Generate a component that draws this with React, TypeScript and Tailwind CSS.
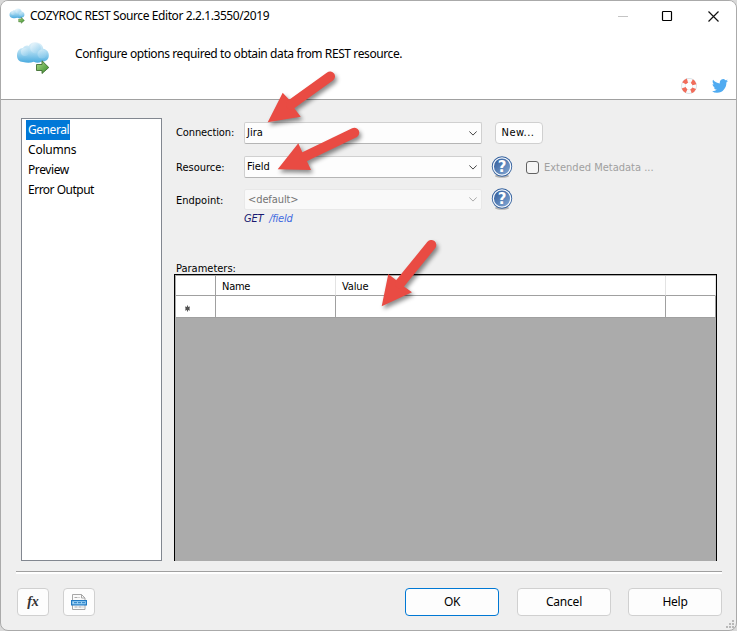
import React from "react";

const UI = "font-['Noto_Sans','Open_Sans',sans-serif] text-[12px] whitespace-pre";
const TAHOMA = "font-['DejaVu_Sans_Condensed','DejaVu_Sans',sans-serif] [font-stretch:condensed] text-[11px] whitespace-pre";

function CloudIcon({ className }: { className: string }) {
  return (
    <svg viewBox="0 0 34 34" className={className}>
      <defs>
        <linearGradient id="cloud" x1="0" y1="0" x2="0" y2="1">
          <stop offset="0" stopColor="#e6f4fb" />
          <stop offset="0.4" stopColor="#b5dff3" />
          <stop offset="1" stopColor="#4aabdf" />
        </linearGradient>
        <linearGradient id="puff" x1="0" y1="0" x2="1" y2="1">
          <stop offset="0" stopColor="#f8fcfe" />
          <stop offset="1" stopColor="#8ccbec" />
        </linearGradient>
        <linearGradient id="leaf" x1="0" y1="0" x2="1" y2="1">
          <stop offset="0" stopColor="#b2dc8c" />
          <stop offset="1" stopColor="#348b27" />
        </linearGradient>
      </defs>
      <path d="M7 21C3 21 .8 18 1 14c.2-4 2.500-7 6-7 1-2 3.500-3 5.500-2C14 2 17 .8 20 1.200c4 .3 7 3 7.200 6.500 4 .5 6 4 5.600 7.300-.4 4-3 5.500-7 5.600-3 1.600-5.500 1.400-8 .2-3.500 1.200-7 1.200-10.800.2z" fill="url(#cloud)" />
      <circle cx="19.500" cy="7" r="5.300" fill="url(#puff)" opacity=".75" />
      <circle cx="9" cy="11" r="4" fill="url(#puff)" opacity=".6" />
      <circle cx="26" cy="13" r="4.500" fill="url(#puff)" opacity=".35" />
      <path d="M20.500 23.500h5.500v-3.700l6.800 6.700-6.800 6v-3h-5.500z" fill="url(#leaf)" stroke="#3f6d32" strokeWidth=".9" />
    </svg>
  );
}

function Lifebuoy() {
  return (
    <svg viewBox="0 0 16 16" className="h-4 w-4">
      <circle cx="8" cy="8" r="5.700" fill="none" stroke="#d5dde2" strokeWidth="4.400" />
      <circle cx="8" cy="8" r="5.400" fill="none" stroke="#fafbfc" strokeWidth="3.600" />
      <circle cx="8" cy="8" r="5.600" fill="none" stroke="#f16d5b" strokeWidth="4.200" strokeDasharray="4.200 4.596" strokeDashoffset="-2.300" />
    </svg>
  );
}

function Bird() {
  return (
    <svg viewBox="0 2 24 20" className="h-[14px] w-4" preserveAspectRatio="none">
      <path fill="#50abf1" d="M23.950 4.570a10 10 0 0 1-2.820.77 4.960 4.960 0 0 0 2.160-2.720c-.95.550-2 .960-3.130 1.180a4.920 4.920 0 0 0-8.380 4.480C7.690 8.090 4.070 6.130 1.640 3.160a4.820 4.820 0 0 0-.67 2.480c0 1.710.870 3.210 2.190 4.100a4.900 4.900 0 0 1-2.230-.62v.06a4.920 4.920 0 0 0 3.950 4.830 5 5 0 0 1-2.210.08 4.940 4.940 0 0 0 4.600 3.420A9.870 9.870 0 0 1 0 19.540a13.990 13.990 0 0 0 7.550 2.210c9.050 0 14-7.500 14-13.980 0-.21 0-.42-.02-.63a9.940 9.940 0 0 0 2.460-2.550z" />
    </svg>
  );
}

function HelpIcon() {
  return (
    <svg viewBox="0 0 22 22" className="block h-[22px] w-[22px]">
      <defs>
        <linearGradient id="ball" x1="0" y1="0" x2="1" y2="1">
          <stop offset="0" stopColor="#2b5797" />
          <stop offset="1" stopColor="#89add8" />
        </linearGradient>
      </defs>
      <ellipse cx="11" cy="20" rx="7" ry="1.700" fill="#777" opacity=".5" />
      <circle cx="11" cy="10.500" r="10.200" fill="#33609d" />
      <circle cx="11" cy="10.500" r="8.700" fill="url(#ball)" stroke="#f5f8fc" strokeWidth="1.300" />
      <text x="11" y="16" textAnchor="middle" fill="#fff" className="font-['DejaVu_Sans'] text-[15px] font-bold">?</text>
    </svg>
  );
}

function Combo({ children, disabled = false }: { children: React.ReactNode; disabled?: boolean }) {
  return (
    <div className={`flex w-[238px] shrink-0 items-center justify-between rounded-[2px] border pr-1 ${disabled ? "h-[21px] border-[#e8e8e8] bg-[#f9f9f9] pl-[3px] text-[#747474]" : "h-[22px] border-[#d0d0d0] border-b-[#b5b5b5] bg-[#fdfdfd] pl-[2px] text-black"}`}>
      {children}
      <svg viewBox="0 0 8 5" className="h-[5px] w-2">
        <path d="M.3.400 4 4.100 7.700.400" fill="none" stroke={disabled ? "#aaa" : "#444"} strokeWidth="1" />
      </svg>
    </div>
  );
}

function Button({ children, className = "" }: { children: React.ReactNode; className?: string }) {
  return (
    <button className={`flex items-center justify-center rounded-[4px] border bg-[#fdfdfd] ${className}`}>{children}</button>
  );
}

const arrows = [
  { head: "267.700,122.300 282.700,92.700 289.700,100.300 294.700,108.700 300.700,116.700", from: [291, 104.500], to: [330, 76.500] },
  { head: "277.700,169.300 298.300,143.300 302.300,152.300 307,161.300 311,170", from: [304, 157], to: [354.300, 132.700] },
  { head: "381.700,306.300 388.300,274 396.300,280.300 404.300,286.700 412,292.300", from: [400, 283.500], to: [431.300, 245] },
];

function Arrows() {
  return (
    <svg viewBox="0 0 737 631" className="pointer-events-none absolute inset-0 h-[631px] w-[737px] drop-shadow-[2px_3px_2px_rgba(0,0,0,0.45)]">
      {arrows.map((a) => (
        <g key={a.head}>
          <polygon points={a.head} fill="#e94b43" />
          <line x1={a.from[0]} y1={a.from[1]} x2={a.to[0]} y2={a.to[1]} stroke="#e94b43" strokeWidth="10" strokeLinecap="round" />
        </g>
      ))}
    </svg>
  );
}

export default function App() {
  return (
    <div className="relative h-[631px] w-[737px] overflow-hidden bg-[#d9d9d9] text-black">
      <div className="flex h-[631px] flex-col overflow-hidden rounded-[8px] border border-[#aaa] bg-[#efefef]">
        <header className="h-[99px] shrink-0 border-b border-[#a0a0a0] bg-white">
          <div className="flex h-[30px] items-center pl-2">
            <CloudIcon className="h-4 w-4" />
            <span className={`${UI} ml-[5px] tracking-[-0.410px]`}>COZYROC REST Source Editor 2.2.1.3550/2019</span>
            <svg viewBox="0 0 104 14" className="mr-[15px] mb-[1px] ml-auto h-[14px] w-[104px]">
              <path d="M1 7.500h10" stroke="#c4c4c4" />
              <rect x="45.500" y="2.500" width="9" height="9" rx=".7" fill="none" stroke="#000" strokeWidth="1.200" />
              <path d="m91.500 2.500 10 10m0-10-10 10" stroke="#111" strokeWidth="1.200" />
            </svg>
          </div>
          <div className="flex h-[68px] pl-[15px]">
            <CloudIcon className="mt-[10px] h-[34px] w-[34px]" />
            <span className={`${UI} mt-[14px] ml-[25px] tracking-[-0.400px]`}>Configure options required to obtain data from REST resource.</span>
            <div className="mt-auto mr-2 mb-[5px] ml-auto flex items-center gap-[15px]">
              <Lifebuoy />
              <Bird />
            </div>
          </div>
        </header>

        <main className="flex h-[471px] shrink-0 pt-[18px] pl-5">
          <nav className="h-[443px] w-[141px] shrink-0 border border-[#828790] bg-white pt-[1px] pl-1">
            <div className={`${UI} h-5 w-[44px] bg-[#0078d7] pl-[2px] leading-[20px] tracking-[-0.450px] text-white`}>General</div>
            <div className={`${UI} h-5 pl-[2px] leading-[20px] tracking-[-0.200px]`}>Columns</div>
            <div className={`${UI} h-5 pl-[2px] leading-[20px] tracking-[-0.400px]`}>Preview</div>
            <div className={`${UI} h-5 pl-[2px] leading-[20px] tracking-[-0.500px]`}>Error Output</div>
          </nav>

          <section className="ml-3 w-[543px] pt-1">
            <div className="flex h-[22px] items-center pl-[2px]">
              <span className={`${TAHOMA} w-[68px] pt-px tracking-[-0.100px]`}>Connection:</span>
              <Combo><span className={`${TAHOMA} pt-px`}>Jira</span></Combo>
              <Button className="ml-[13px] h-[22px] w-12 border-[#d0d0d0]"><span className={`${TAHOMA} pt-px pr-[2px] tracking-[0.500px]`}>New...</span></Button>
            </div>
            <div className="mt-3 flex h-[22px] items-center pl-[2px]">
              <span className={`${TAHOMA} w-[68px] pt-[2px]`}>Resource:</span>
              <Combo><span className={`${TAHOMA} pt-px`}>Field</span></Combo>
              <div className="ml-[9px]"><HelpIcon /></div>
              <div className="ml-[13px] h-[13px] w-[13px] rounded-[3px] border border-[#626262] bg-[#f5f5f5]" />
              <span className={`${TAHOMA} ml-[5px] pt-[2px] text-[#a0a0a0]`}>Extended Metadata ...</span>
            </div>
            <div className="mt-[11px] flex h-[21px] items-center pl-[2px]">
              <span className={`${TAHOMA} w-[68px] pt-[4px]`}>Endpoint:</span>
              <Combo disabled><span className={`${TAHOMA} pt-[2px] tracking-[-0.100px]`}>&lt;default&gt;</span></Combo>
              <div className="mb-[2px] ml-[9px]"><HelpIcon /></div>
            </div>
            <div className={`${TAHOMA} flex h-4 gap-[6px] pl-[70px] leading-[18px] tracking-[-0.250px] italic`}>
              <span className="text-[#191970]">GET</span>
              <span className="text-[#4169e1]">/field</span>
            </div>
            <div className={`${TAHOMA} mt-[35px] h-[13px] pl-[2px] leading-[15px]`}>Parameters:</div>

            <div className="h-[287px] border-x border-t border-black bg-[#ababab] pt-px pl-px">
              <div className="grid h-[42px] w-[540px] grid-cols-[40px_120px_330px_50px] grid-rows-[20px_22px] bg-white">
                <div className="border-r border-b border-[#a0a0a0]" />
                <div className={`${TAHOMA} border-r border-b border-r-[#e3e3e3] border-b-[#a0a0a0] pl-[6px] leading-[21px] tracking-[-0.250px]`}>Name</div>
                <div className={`${TAHOMA} border-r border-b border-r-[#e3e3e3] border-b-[#a0a0a0] pl-[6px] leading-[21px] tracking-[-0.150px]`}>Value</div>
                <div className="border-r border-b border-r-[#e3e3e3] border-b-[#a0a0a0]" />
                <div className="flex items-center border-r border-b border-[#a0a0a0] pl-2">
                  <svg viewBox="0 0 7 7" className="mt-[3px] h-[7px] w-[7px]">
                    <circle cx="3.500" cy="3.500" r="2" fill="#444" />
                    <path d="M3.500.500v6M1 1.800l5 3.500M6 1.800 1 5.300" stroke="#555" strokeWidth="1" />
                  </svg>
                </div>
                <div className="border-r border-b border-[#a0a0a0]" />
                <div className="border-r border-b border-[#a0a0a0]" />
                <div className="border-r border-b border-[#a0a0a0]" />
              </div>
            </div>
          </section>
        </main>

        <footer className="ml-[15px] w-[706px] border-t border-[#a0a0a0]">
          <div className="h-[2px] bg-white" />
          <div className="flex pt-[14px] pl-px">
            <Button className="h-7 w-8 border-[#d0d0d0]">
              <span className="mb-[2px] font-['Liberation_Serif',serif] text-[14px] font-bold text-[#333] italic">fx</span>
            </Button>
            <Button className="ml-[14px] h-7 w-8 border-[#d0d0d0]">
              <svg viewBox="0 0 16 17" className="h-[17px] w-4">
                <path d="M1.500.500h9l3.500 3.500v11.500h-12.500z" fill="#fafafa" stroke="#a7a7a7" />
                <path d="M10.500.500v3.500h3.500" fill="none" stroke="#a7a7a7" />
                <path d="M3.500 3.500h5M3.500 13h9" stroke="#aaa" strokeDasharray="3 1" />
                <rect x=".6" y="6.600" width="14.800" height="4.300" fill="#9ed3f5" stroke="#2079c3" strokeWidth="1.200" />
                <path d="M3 8.700h11" stroke="#2079c3" strokeDasharray="3 1" />
              </svg>
            </Button>
            <Button className="ml-[310px] h-7 w-[94px] border-[#0078d4]"><span className={`${UI} tracking-[-0.500px]`}>OK</span></Button>
            <Button className="ml-[18px] h-7 w-[94px] border-[#d0d0d0]"><span className={`${UI} tracking-[-0.200px]`}>Cancel</span></Button>
            <Button className="ml-[17px] h-7 w-[94px] border-[#d0d0d0]"><span className={`${UI} tracking-[-0.300px]`}>Help</span></Button>
          </div>
        </footer>
      </div>
      <svg viewBox="0 0 8 8" className="absolute right-[3px] bottom-[3px] h-2 w-2">
        <path d="M6 0h2v2H6zM3 3h2v2H3zM6 3h2v2H6zM0 6h2v2H0zM3 6h2v2H3zM6 6h2v2H6z" fill="#b9b9b9" />
      </svg>
      <Arrows />
    </div>
  );
}
